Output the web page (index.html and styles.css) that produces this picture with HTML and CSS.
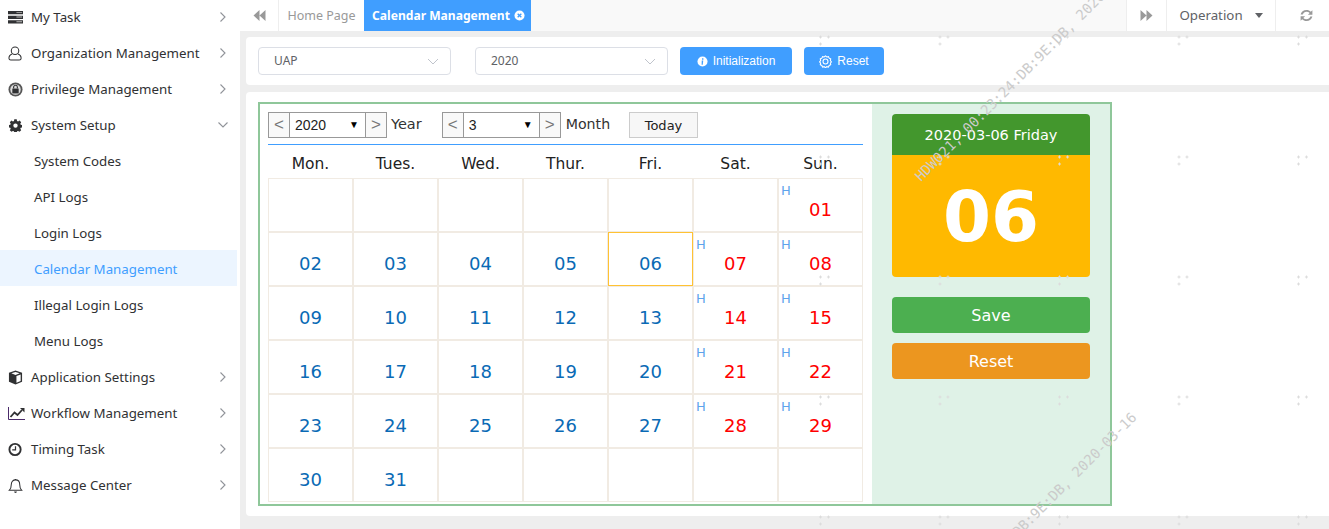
FILE: index.html
```html
<!DOCTYPE html>
<html lang="en">
<head>
<meta charset="utf-8">
<title>Calendar Management</title>
<link rel="stylesheet" href="styles.css">
</head>
<body>
<div class="app">
  <aside class="sidebar">
    <ul class="menu">
      <li class="item"><svg class="ico" viewBox="0 0 16 14"><path d="M0 0h16v3.500H0zM0 5h16v3.500H0zM0 10h16v3.500H0z" fill="#303133"/><path d="M9 1h6v1H9zM9 6h6v1H9zM9 11h6v1H9z" fill="#bbb"/></svg><span class="lbl">My Task</span><svg class="chev" viewBox="0 0 8 12"><path d="M1.500 1.500 6 6l-4.500 4.500" /></svg></li>
      <li class="item"><svg class="ico" viewBox="0 0 16 16"><circle cx="7.500" cy="5" r="4" fill="none" stroke="#303133" stroke-width="1.100"/><path d="M4.500 8.500C1.500 9.500 1 11.500 1 13c0 1.500 1 2 2 2h9c1 0 2-.5 2-2 0-1.500-.5-3.500-3.500-4.500" fill="none" stroke="#303133" stroke-width="1.100"/></svg><span class="lbl">Organization Management</span><svg class="chev" viewBox="0 0 8 12"><path d="M1.500 1.500 6 6l-4.500 4.500" /></svg></li>
      <li class="item"><svg class="ico" viewBox="0 0 16 16"><circle cx="8" cy="8" r="7.500" fill="#555"/><circle cx="8" cy="8" r="5.600" fill="#ddd"/><rect x="4.600" y="7" width="6.800" height="5.200" fill="#303133"/><path d="M6 7V5.500a2 2 0 0 1 4 0V7" fill="none" stroke="#303133" stroke-width="1.200"/></svg><span class="lbl">Privilege Management</span><svg class="chev" viewBox="0 0 8 12"><path d="M1.500 1.500 6 6l-4.500 4.500" /></svg></li>
      <li class="item"><svg class="ico gear" viewBox="0 0 16 16"><path fill-rule="evenodd" fill="#303133" d="M6.500 1h3l.4 2 1.300.6 1.800-1.100 2 2.100-1.100 1.700.5 1.300 2 .4v2.900l-2 .4-.5 1.300 1.100 1.700-2 2.100-1.800-1.100-1.300.5-.4 2h-3l-.4-2-1.300-.5-1.800 1.100-2-2.100 1.100-1.700-.5-1.300-2-.4V8l2-.4.5-1.300-1.100-1.700 2-2.100 1.800 1.100 1.300-.6zM8 6a2.700 2.700 0 1 0 0 5.400A2.700 2.700 0 0 0 8 6z" transform="translate(0 -.6)"/></svg><span class="lbl">System Setup</span><svg class="chev" viewBox="0 0 12 8"><path d="M1.500 1.500 6 6l4.500-4.500" /></svg></li>
      <li class="sub">System Codes</li>
      <li class="sub">API Logs</li>
      <li class="sub">Login Logs</li>
      <li class="sub active">Calendar Management</li>
      <li class="sub">Illegal Login Logs</li>
      <li class="sub">Menu Logs</li>
      <li class="item"><svg class="ico" viewBox="0 0 16 16"><path d="M8 .5 15 3v9.500L8 15.500 1 12.500V3z" fill="#303133"/><path d="M8 2 12.500 3.500 8 5.200 3.500 3.500zM9 6.500l4.500-1.700v6.800L9 13.500z" fill="#fff"/></svg><span class="lbl">Application Settings</span><svg class="chev" viewBox="0 0 8 12"><path d="M1.500 1.500 6 6l-4.500 4.500" /></svg></li>
      <li class="item"><svg class="ico wide" viewBox="0 0 17 13"><path d="M.5 0v12.500H17" fill="none" stroke="#4a2a6a"/><path d="M2.500 10 6.500 5.500 9.500 8 14 3" fill="none" stroke="#303133" stroke-width="1.800"/><path d="M12 1h4.500v4.500z" fill="#303133"/></svg><span class="lbl">Workflow Management</span><svg class="chev" viewBox="0 0 8 12"><path d="M1.500 1.500 6 6l-4.500 4.500" /></svg></li>
      <li class="item"><svg class="ico" viewBox="0 0 16 16"><circle cx="7.500" cy="8" r="6" fill="none" stroke="#303133" stroke-width="2"/><path d="M8 4.500V8.500H4.500" fill="none" stroke="#303133" stroke-width="1.300"/></svg><span class="lbl">Timing Task</span><svg class="chev" viewBox="0 0 8 12"><path d="M1.500 1.500 6 6l-4.500 4.500" /></svg></li>
      <li class="item"><svg class="ico" viewBox="0 0 16 16"><path d="M1.500 13c1.500-1.500 2-3 2-6 0-3 2-5 4.500-5s4.500 2 4.500 5c0 3 .5 4.500 2 6z" fill="none" stroke="#303133" stroke-width="1.100"/><path d="M6.500 14.500a1.500 1.500 0 0 0 3 0zM7.300 1h1.400v1.200H7.300z" fill="#303133"/></svg><span class="lbl">Message Center</span><svg class="chev" viewBox="0 0 8 12"><path d="M1.500 1.500 6 6l-4.500 4.500" /></svg></li>
    </ul>
  </aside>
  <main class="main">
    <header class="tabs">
      <div class="tool back"><svg class="dbl" viewBox="0 0 13 13"><path d="M6.500 1v11L.5 6.500zM12.500 1v11l-6-5.500z"/></svg></div>
      <div class="tab">Home Page</div>
      <div class="tab on">Calendar Management<svg class="x" viewBox="0 0 12 12"><circle cx="6" cy="6" r="5.500" fill="#fff"/><path d="M4 4l4 4M8 4l-4 4" stroke="#409eff" stroke-width="1.500"/></svg></div>
      <div class="tab-fill"></div>
      <div class="tool fwd"><svg class="dbl" viewBox="0 0 13 13"><path d="M.5 1v11l6-5.500zM6.500 1v11l6-5.500z"/></svg></div>
      <div class="tool oper">Operation<span class="caret"></span></div>
      <div class="tool refresh"><svg viewBox="0 0 14 14" class="rf"><path d="M1.500 6C2 3.500 4.200 1.800 7 1.800c1.700 0 3 .6 4 1.700L12.500 2v4.200H8.300L10 4.600C9.200 3.800 8.200 3.400 7 3.400 5.300 3.400 4 4.400 3.500 6zM12.500 8C12 10.500 9.800 12.200 7 12.200c-1.700 0-3-.6-4-1.700L1.500 12V7.800h4.200L4 9.400c.8.8 1.800 1.200 3 1.200 1.700 0 3-1 3.500-2.600z"/></svg></div>
    </header>
    <section class="card filter">
      <div class="pick"><span>UAP</span><svg class="down" viewBox="0 0 12 7"><path d="M1 1l5 5 5-5"/></svg></div>
      <div class="pick second"><span>2020</span><svg class="down" viewBox="0 0 12 7"><path d="M1 1l5 5 5-5"/></svg></div>
      <button class="btn init"><svg class="bi" viewBox="0 0 12 12"><circle cx="6" cy="6" r="5.500" fill="#fff"/><path d="M5.200 5h1.600L6.300 9.500H5zM5.500 2.500h1.500V4H5.500z" fill="#409eff"/></svg>Initialization</button>
      <button class="btn rst"><svg class="bi big-bi" viewBox="0 0 12 12"><path d="M6 .8l1.200 1 1.500-.3.700 1.400 1.400.7-.3 1.500 1 1.200-1 1.200.3 1.500-1.400.7-.7 1.400-1.500-.3-1.200 1-1.200-1-1.500.3-.7-1.400-1.400-.7.3-1.500-1-1.200 1-1.200-.3-1.500 1.400-.7.7-1.400 1.500.3z" fill="none" stroke="#fff"/><circle cx="6" cy="6" r="2.300" fill="none" stroke="#fff"/></svg>Reset</button>
    </section>
    <section class="card body">
      <div class="frame">
        <div class="cal">
          <div class="bar">
            <div class="arrow">&lt;</div><div class="sel"><span>2020</span><i>▼</i></div><div class="arrow">&gt;</div><span class="unit">Year</span>
            <div class="arrow second-group">&lt;</div><div class="sel"><span>3</span><i>▼</i></div><div class="arrow">&gt;</div><span class="unit month">Month</span>
            <div class="today">Today</div>
          </div>
          <div class="heads"><span>Mon.</span><span>Tues.</span><span>Wed.</span><span>Thur.</span><span>Fri.</span><span>Sat.</span><span>Sun.</span></div>
          <div class="grid">
            <div class="c"></div><div class="c"></div><div class="c"></div><div class="c"></div><div class="c"></div><div class="c"></div><div class="c r"><b>H</b>01</div>
            <div class="c">02</div><div class="c">03</div><div class="c">04</div><div class="c">05</div><div class="c sel-day">06</div><div class="c r"><b>H</b>07</div><div class="c r"><b>H</b>08</div>
            <div class="c">09</div><div class="c">10</div><div class="c">11</div><div class="c">12</div><div class="c">13</div><div class="c r"><b>H</b>14</div><div class="c r"><b>H</b>15</div>
            <div class="c">16</div><div class="c">17</div><div class="c">18</div><div class="c">19</div><div class="c">20</div><div class="c r"><b>H</b>21</div><div class="c r"><b>H</b>22</div>
            <div class="c">23</div><div class="c">24</div><div class="c">25</div><div class="c">26</div><div class="c">27</div><div class="c r"><b>H</b>28</div><div class="c r"><b>H</b>29</div>
            <div class="c">30</div><div class="c">31</div><div class="c"></div><div class="c"></div><div class="c"></div><div class="c"></div><div class="c"></div>
          </div>
        </div>
        <div class="side">
          <div class="date">2020-03-06 Friday</div>
          <div class="big">06</div>
          <div class="act save">Save</div>
          <div class="act reset">Reset</div>
        </div>
      </div>
    </section>
  </main>
</div>
<div class="marks">
  <svg class="dots" width="1329" height="529"><defs><pattern id="p" x="818" y="34" width="119.500" height="120" patternUnits="userSpaceOnUse"><path d="M1 3h3M2.500 1.500v3M9 3h3M10.500 1.500v3M1 10h3M2.500 8.500v3" stroke="#dcdcdc" stroke-width="1" fill="none"/></pattern></defs><rect x="818" y="34" width="511" height="495" fill="url(#p)"/></svg>
  <span class="wm one">HDW021, 00:23:24:DB:9E:DB, 2020-03-16</span>
  <span class="wm two">HDW021, 00:23:24:DB:9E:DB, 2020-03-16</span>
</div>
</body>
</html>
```
FILE: styles.css
```css
* { box-sizing: border-box; }
html, body { margin: 0; padding: 0; width: 1329px; height: 529px; overflow: hidden; background: #fff; }
body { font-family: "Noto Sans", "Liberation Sans", sans-serif; color: #303133; position: relative; }
.app { display: flex; height: 529px; }
.sidebar { width: 240px; flex: none; background: #fff; overflow: hidden; }
.menu { list-style: none; margin: -2px 0 0; padding: 0; width: 237px; }
.item, .sub { height: 36px; display: flex; align-items: center; font-size: 13.300px; color: #303133; padding-top: 2px; }
.item { padding-left: 8px; position: relative; }
.sub { padding-left: 34px; }
.sub.active { background: #ecf5ff; color: #409eff; }
.ico { width: 15px; height: 15px; flex: none; margin-right: 8px; }
.ico.wide { width: 17px; margin-right: 6px; }
.ico.gear { width: 13px; height: 13px; margin: 0 9px 0 1px; }
.lbl { flex: 1; }
.chev { width: 8px; height: 12px; margin-right: 10px; fill: none; stroke: #909399; stroke-width: 1.100; flex: none; }
.item:nth-child(4) .chev { width: 12px; height: 8px; margin-right: 8px; }

.main { flex: 1; min-width: 0; background: #eee; display: flex; flex-direction: column; height: 529px; }
.tabs { height: 31px; flex: none; background: #f9f9f9; display: flex; font-size: 13px; }
.tool { background: #fff; display: flex; align-items: center; justify-content: center; height: 31px; flex: none; }
.back { width: 39px; border-right: 1px solid #eee; }
.fwd { width: 40px; border-left: 1px solid #eee; }
.oper { width: 110px; border-left: 1px solid #eee; border-right: 1px solid #eee; color: #606266; font-size: 13.300px; padding-bottom: 2px; }
.refresh { width: 53px; padding-left: 7px; }
.dbl { width: 13px; height: 13px; fill: #999; }
.rf { width: 15px; height: 15px; fill: #999; }
.caret { border: 4px solid transparent; border-top: 5px solid #606266; border-bottom: 0; margin: 2px 0 0 12px; }
.tab { width: 85px; background: #fff; color: #999; display: flex; align-items: center; justify-content: center; font-size: 12.500px; }
.tab.on { width: 167px; background: #409eff; color: #fff; font-weight: 700; gap: 4px; font-size: 12.100px; padding-left: 2px; }
.x { width: 11px; height: 11px; }
.tab-fill { flex: 1; }

.card { background: #fff; margin-left: 6px; border-radius: 4px 0 0 4px; }
.filter { height: 48px; margin-top: 6px; padding: 10px 12px; display: flex; }
.pick { width: 193px; height: 28px; border: 1px solid #dcdfe6; border-radius: 4px; padding: 0 11px 2px 15px; display: flex; align-items: center; justify-content: space-between; font-size: 12px; color: #606266; }
.second { margin-left: 24px; }
.down { width: 12px; height: 7px; fill: none; stroke: #c0c4cc; stroke-width: 1; margin-top: 2px; }
.btn { height: 28px; border: 0; border-radius: 4px; background: #409eff; color: #fff; font: 12px "Liberation Sans", sans-serif; display: flex; align-items: center; justify-content: center; gap: 5px; padding: 0; }
.init { width: 112px; margin-left: 12px; }
.rst { width: 80px; margin-left: 12px; }
.bi { width: 11px; height: 11px; }
.big-bi { width: 13px; height: 13px; }
.body { height: 424px; margin-top: 7px; padding: 10px 12px; }
.frame { width: 854px; height: 404px; border: 2px solid #8fc79a; display: flex; }
.cal { width: 612px; flex: none; padding: 8px 0 0 8px; font-family: "DejaVu Sans", sans-serif; }
.bar { display: flex; align-items: center; height: 32.500px; border-bottom: 1px solid #409eff; width: 595px; padding-bottom: 6px; }
.arrow { width: 22px; height: 26px; border: 1px solid #999; background: #f9f9f9; color: #777; display: flex; align-items: center; justify-content: center; font: 17px "Liberation Sans", sans-serif; flex: none; }
.second-group { margin-left: 20px; }
.sel { width: 75px; height: 26px; border-top: 1px solid #999; border-bottom: 1px solid #999; padding: 0 6px 0 5px; display: flex; align-items: center; justify-content: space-between; font: 14px "Liberation Sans", sans-serif; color: #222; flex: none; }
.sel i { font-style: normal; font-size: 10px; color: #000; }
.unit { font-size: 14.500px; margin-left: 4px; color: #333; margin-top: -2px; white-space: nowrap; flex: none; }
.month { margin-left: 5px; font-size: 14.200px; }
.today { width: 69px; height: 26px; margin-left: auto; margin-right: 165px; border: 1px solid #ccc; background: #f7f7f7; font-size: 13px; color: #222; display: flex; align-items: center; justify-content: center; padding-top: 2px; }
.heads { display: grid; grid-template-columns: repeat(7, 85px); width: 595px; height: 33px; align-items: center; text-align: center; font-size: 15.500px; color: #222; padding-top: 6px; }
.grid { display: grid; grid-template-columns: repeat(7, 85px); grid-auto-rows: 54px; }
.c { border: 1px solid #f1ebe3; position: relative; text-align: center; color: #0a6ab5; font-size: 18px; padding-top: 20px; line-height: 22px; }
.c.r { color: #f00; }
.c b { position: absolute; left: 2px; top: 5px; font-weight: 400; font-size: 13px; line-height: 14px; color: #5ea3ec; }
.sel-day { border-color: #ffc233; }
.side { flex: 1; background: #dff2e7; padding: 10px 20px; text-align: center; font-family: "DejaVu Sans", sans-serif; color: #fff; }
.date { height: 41px; line-height: 43px; background: #43972d; border-radius: 4px 4px 0 0; font-size: 14.500px; }
.big { height: 122px; line-height: 125px; background: #ffb900; border-radius: 0 0 4px 4px; font-size: 69px; font-weight: 700; }
.act { height: 36px; line-height: 38px; border-radius: 4px; font-size: 16px; }
.save { background: #4caf50; margin-top: 20px; }
.reset { background: #ec961f; margin-top: 10px; }

.marks { position: absolute; left: 0; top: 0; width: 1329px; height: 529px; overflow: hidden; pointer-events: none; }
.dots { display: block; }
.wm { position: absolute; font: 14px "DejaVu Sans Mono", monospace; color: #cbcbcb; white-space: nowrap; transform: rotate(-45deg); transform-origin: 0 100%; }
.wm.one { left: 923px; top: 168px; }
.wm.two { left: 919px; top: 625px; }
```
